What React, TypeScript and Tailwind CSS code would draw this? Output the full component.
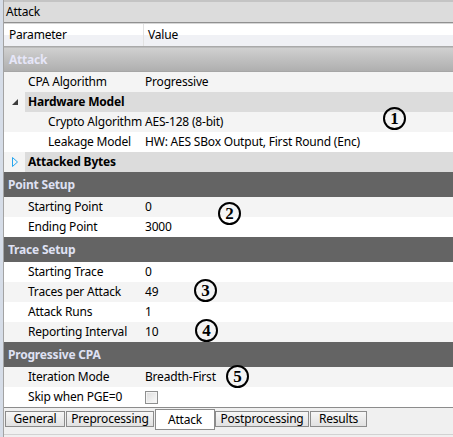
import React from 'react';

type Row =
  | { kind: 'cat'; label: string }
  | { kind: 'group'; label: string; open: boolean }
  | { kind: 'prop'; label: string; value?: string; deep?: boolean; light: boolean; check?: boolean };

const rows: Row[] = [
  { kind: 'prop', label: 'CPA Algorithm', value: 'Progressive', light: true },
  { kind: 'group', label: 'Hardware Model', open: true },
  { kind: 'prop', label: 'Crypto Algorithm', value: 'AES-128 (8-bit)', deep: true, light: true },
  { kind: 'prop', label: 'Leakage Model', value: 'HW: AES SBox Output, First Round (Enc)', deep: true, light: false },
  { kind: 'group', label: 'Attacked Bytes', open: false },
  { kind: 'cat', label: 'Point Setup' },
  { kind: 'prop', label: 'Starting Point', value: '0', light: true },
  { kind: 'prop', label: 'Ending Point', value: '3000', light: false },
  { kind: 'cat', label: 'Trace Setup' },
  { kind: 'prop', label: 'Starting Trace', value: '0', light: false },
  { kind: 'prop', label: 'Traces per Attack', value: '49', light: true },
  { kind: 'prop', label: 'Attack Runs', value: '1', light: false },
  { kind: 'prop', label: 'Reporting Interval', value: '10', light: true },
  { kind: 'cat', label: 'Progressive CPA' },
  { kind: 'prop', label: 'Iteration Mode', value: 'Breadth-First', light: true },
  { kind: 'prop', label: 'Skip when PGE=0', light: false, check: true },
];

// annotation markers drawn over the grid
const marks = [
  { n: '1', x: 383, y: 107 },
  { n: '2', x: 218, y: 202 },
  { n: '3', x: 194, y: 279 },
  { n: '4', x: 195, y: 319 },
  { n: '5', x: 226, y: 365 },
];

const tabs = [
  { label: 'General', w: 'w-[60px]' },
  { label: 'Preprocessing', w: 'w-[88px]' },
  { label: 'Attack', w: 'w-[60px]', active: true },
  { label: 'Postprocessing', w: 'w-[94px]' },
  { label: 'Results', w: 'w-[57px]' },
];

function GridRow({ row }: { row: Row }) {
  if (row.kind === 'cat') {
    return (
      <div className="h-[25px] flex items-center bg-[#646464] pl-[4px] font-bold text-[#dfe1f3]">
        {row.label}
      </div>
    );
  }
  if (row.kind === 'group') {
    return (
      <div className="h-[20px] flex">
        <div className="w-[21px] bg-[#f4f4f4] flex items-center justify-center pl-[1px]">
          {row.open ? (
            <svg width="6" height="6" viewBox="0 0 6 6">
              <polygon points="6,0 6,6 0,6" fill="#3c3c3c" />
            </svg>
          ) : (
            <svg width="7" height="10" viewBox="0 0 7 10">
              <polygon points="0.5,0.5 5.5,5 0.5,9.5" fill="none" stroke="#27a6ee" strokeWidth="1" />
            </svg>
          )}
        </div>
        <div className="flex-1 bg-[#dcdcdc] flex items-center pl-[3px] font-bold">{row.label}</div>
      </div>
    );
  }
  return (
    <div className={`h-[20px] flex items-center ${row.light ? 'bg-[#f4f4f4]' : 'bg-white'}`}>
      <div className={`w-[140px] shrink-0 whitespace-nowrap ${row.deep ? 'pl-[44px]' : 'pl-[24px]'}`}>{row.label}</div>
      <div className="pl-[1px] whitespace-nowrap flex items-center">
        {row.check ? (
          <span className="block w-[13px] h-[13px] border border-[#8e8f8f] bg-linear-to-br from-[#dcdcdc] to-[#fbfbfb] shadow-[inset_0_0_0_1px_#f4f4f4]" />
        ) : (
          row.value
        )}
      </div>
    </div>
  );
}

export default function App() {
  return (
    <div className="relative w-[453px] h-[437px] overflow-hidden flex bg-white text-[12px] tracking-[-0.2px] text-black font-['Noto_Sans','Liberation_Sans',sans-serif] leading-none">
      <div className="w-[4px] shrink-0 bg-[#d6dde8] border-r border-[#a3a3a3]" />
      <div className="flex-1 flex flex-col">
        {/* title */}
        <div className="h-[23px] shrink-0 flex items-center pl-[2px] bg-[#dcdcdc] border-t-2 border-[#c4c4c4] border-b border-b-[#909090]">
          Attack
        </div>
        {/* column header */}
        <div className="h-[24px] shrink-0 flex border-t border-[#d6d6d6] border-b border-b-[#aaaaaa] bg-linear-to-b from-white from-50% to-[#f0f1f5] to-50%">
          <div className="w-[140px] flex items-center pl-[5px] border-r border-[#e2e2e2]">Parameter</div>
          <div className="flex items-center pl-[4px]">Value</div>
        </div>
        {/* first category */}
        <div className="h-[25px] shrink-0 flex items-center pl-[5px] font-bold text-[#e6e6f8] bg-linear-to-b from-[#d0d0d0] to-[#afafaf] border-t border-[#bcbcbc] border-b border-b-[#a6a6a6]">
          Attack
        </div>
        {rows.map((r, i) => (
          <GridRow key={i} row={r} />
        ))}
        {/* tabs */}
        <div className="flex-1 flex flex-col bg-[#f0f0f0] border-t border-[#8c8c8c]">
          <div className="h-[26px] flex items-start pl-[1px]">
            {tabs.map((t) =>
              t.active ? (
                <div
                  key={t.label}
                  className={`${t.w} h-[21px] mt-[1px] bg-white border border-[#8c8c8c] flex items-center justify-center pt-[1px]`}
                >
                  {t.label}
                </div>
              ) : (
                <div
                  key={t.label}
                  className={`${t.w} h-[16px] mt-[3px] mr-[1px] border border-[#8c8c8c] bg-linear-to-b from-[#f7f7f7] to-[#e1e1e1] flex items-center justify-center`}
                >
                  {t.label}
                </div>
              )
            )}
          </div>
          <div className="h-[1px] bg-[#d2d2d2]" />
        </div>
      </div>
      {marks.map((m) => (
        <div
          key={m.n}
          style={{ left: m.x, top: m.y }}
          className="absolute w-[23px] h-[23px] rounded-full border-2 border-black flex items-center justify-center font-['Liberation_Serif',serif] font-bold text-[17px] tracking-normal"
        >
          {m.n}
        </div>
      ))}
    </div>
  );
}
